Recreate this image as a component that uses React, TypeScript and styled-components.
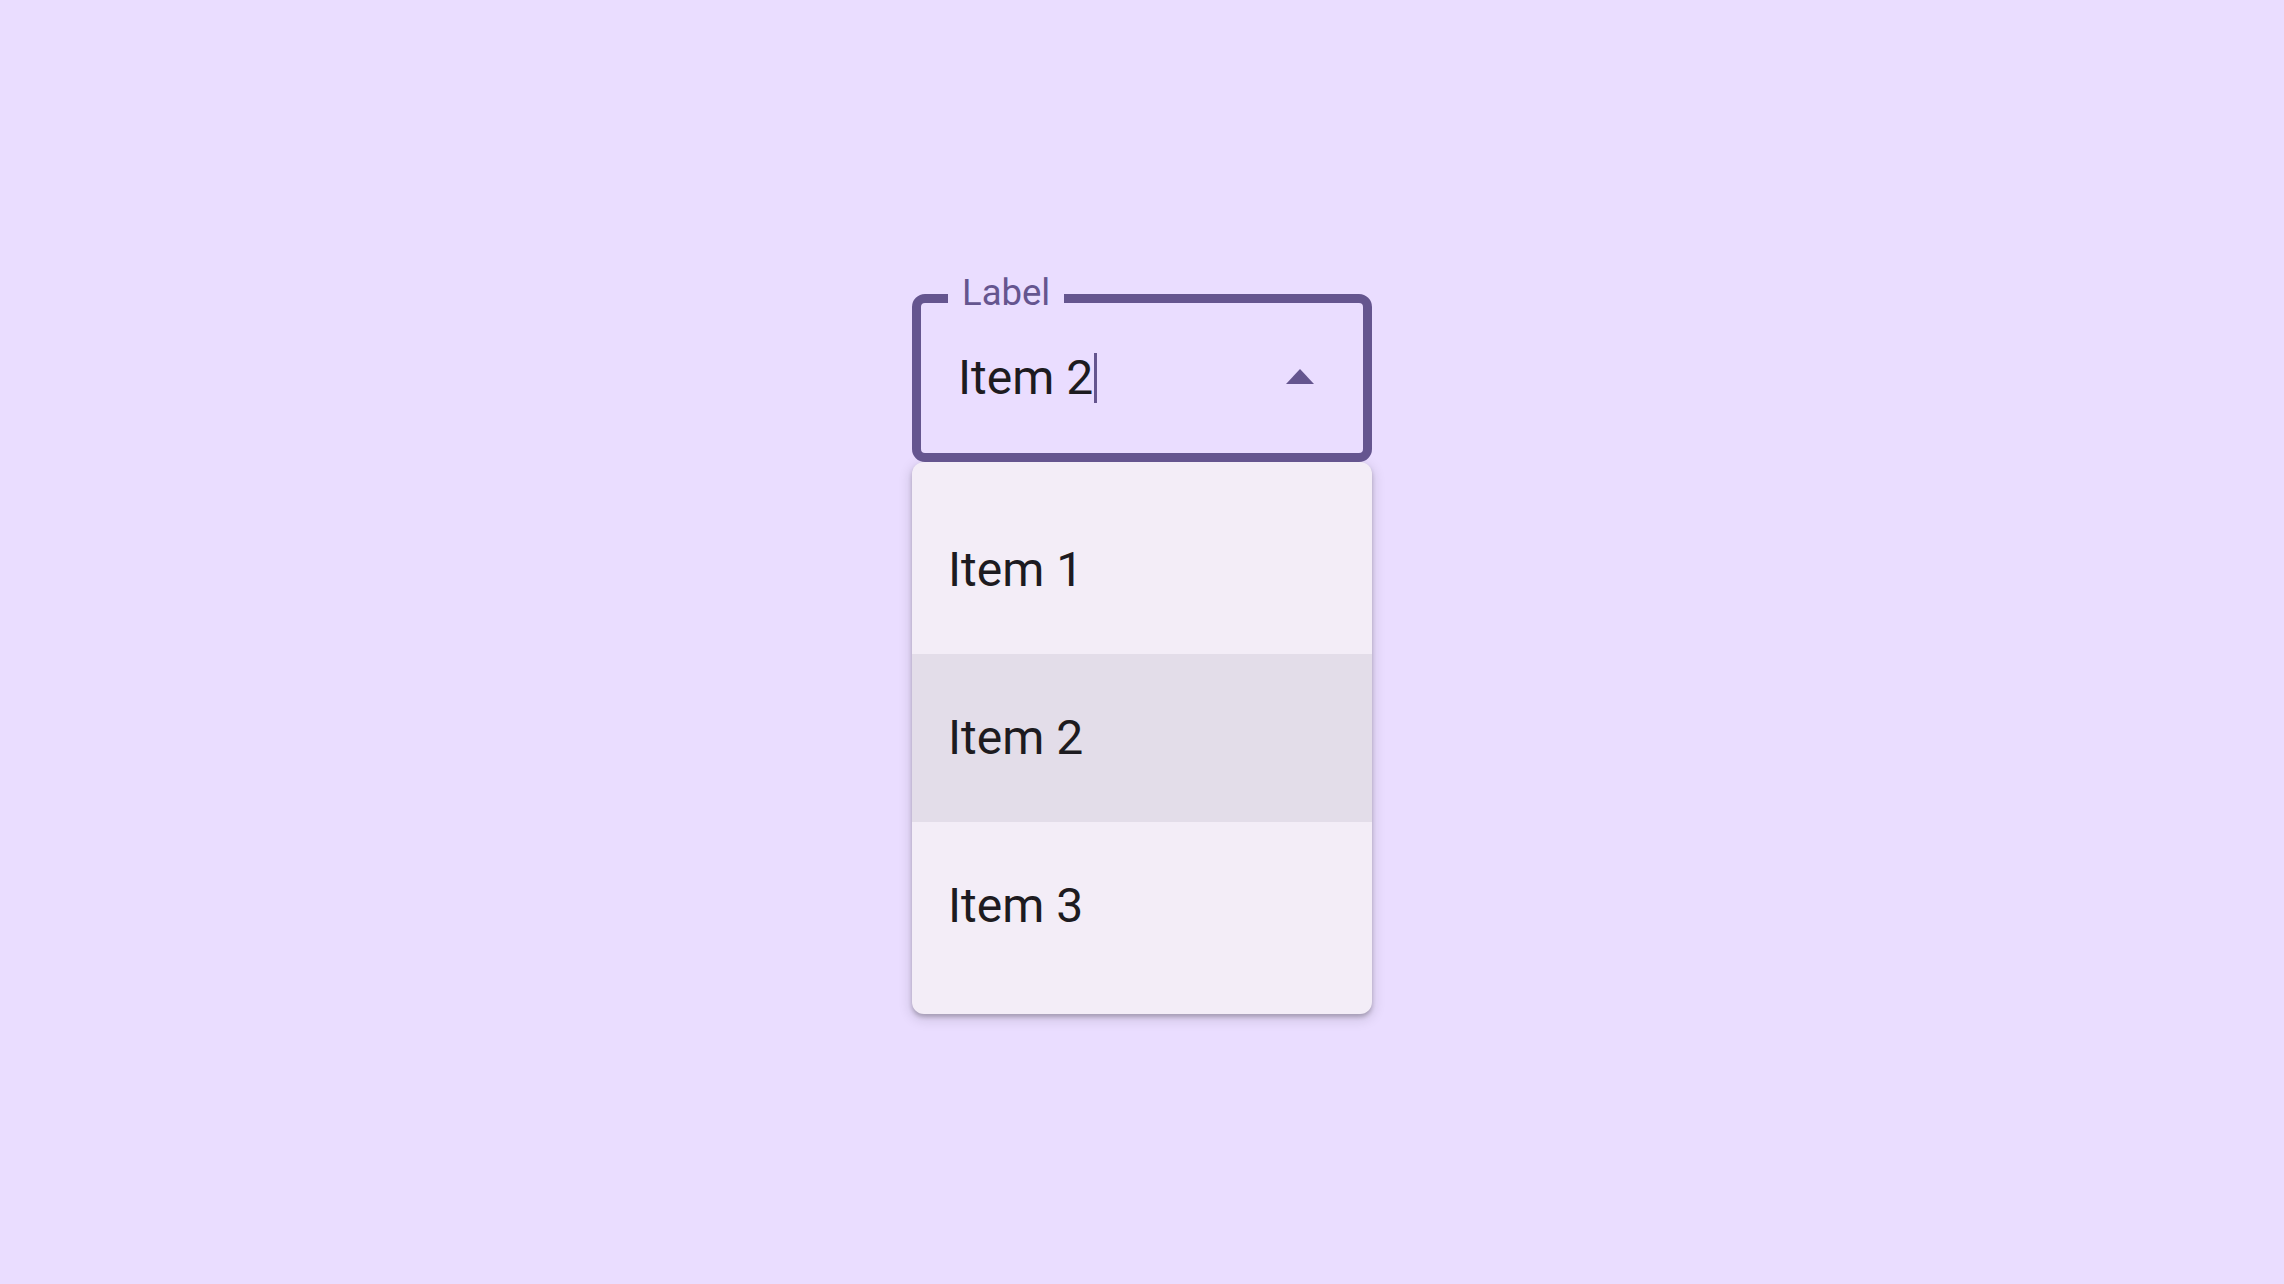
import React from "react";
import styled, { createGlobalStyle } from "styled-components";

const GlobalStyle = createGlobalStyle`
  html, body {
    margin: 0;
    padding: 0;
    background: #eaddff;
    font-family: Roboto, "Noto Sans", "Liberation Sans", sans-serif;
    -webkit-font-smoothing: antialiased;
  }
  * { box-sizing: border-box; }
`;

const Page = styled.div`
  min-height: 100vh;
  display: flex;
  justify-content: center;
  align-items: flex-start;
  padding-top: 294px;
`;

const Dropdown = styled.div`
  width: 460px;
  display: flex;
  flex-direction: column;
`;

const Field = styled.div`
  position: relative;
  height: 168px;
  border: 9px solid #65558f;
  border-radius: 13px;
  display: flex;
  align-items: center;
  padding: 0 49px 0 37px;
`;

const FloatingLabel = styled.span`
  position: absolute;
  top: -28px;
  left: 27px;
  padding: 0 14px;
  background: #eaddff;
  color: #65558f;
  font-size: 36.5px;
  line-height: 36px;
`;

const Value = styled.span`
  flex: 1;
  display: flex;
  align-items: center;
  color: #1d1b20;
  font-size: 48px;
  line-height: 48px;
`;

const Caret = styled.span`
  display: inline-block;
  width: 3px;
  height: 50px;
  margin-left: 1px;
  background: #65558f;
`;

const Arrow = styled.svg`
  flex: none;
  margin-bottom: 3px;
`;

const Menu = styled.ul`
  list-style: none;
  margin: 0;
  padding: 24px 0;
  background: #f3edf7;
  border-radius: 12px;
  box-shadow: 0 3px 4px rgba(0, 0, 0, 0.22), 0 4px 12px 3px rgba(0, 0, 0, 0.1);
  overflow: hidden;
`;

const MenuItem = styled.li<{ $selected?: boolean }>`
  height: 168px;
  display: flex;
  align-items: center;
  padding: 0 36px;
  color: #1d1b20;
  font-size: 48px;
  line-height: 48px;
  background: ${(p) => (p.$selected ? "#e3dde9" : "transparent")};
`;

const items = ["Item 1", "Item 2", "Item 3"];

export default function App() {
  const selected = "Item 2";
  return (
    <>
      <GlobalStyle />
      <Page>
        <Dropdown>
          <Field>
            <FloatingLabel>Label</FloatingLabel>
            <Value>
              {selected}
              <Caret />
            </Value>
            <Arrow width="28" height="15" viewBox="0 0 28 15">
              <polygon points="0,15 14,0 28,15" fill="#65558f" />
            </Arrow>
          </Field>
          <Menu>
            {items.map((it) => (
              <MenuItem key={it} $selected={it === selected}>
                {it}
              </MenuItem>
            ))}
          </Menu>
        </Dropdown>
      </Page>
    </>
  );
}
